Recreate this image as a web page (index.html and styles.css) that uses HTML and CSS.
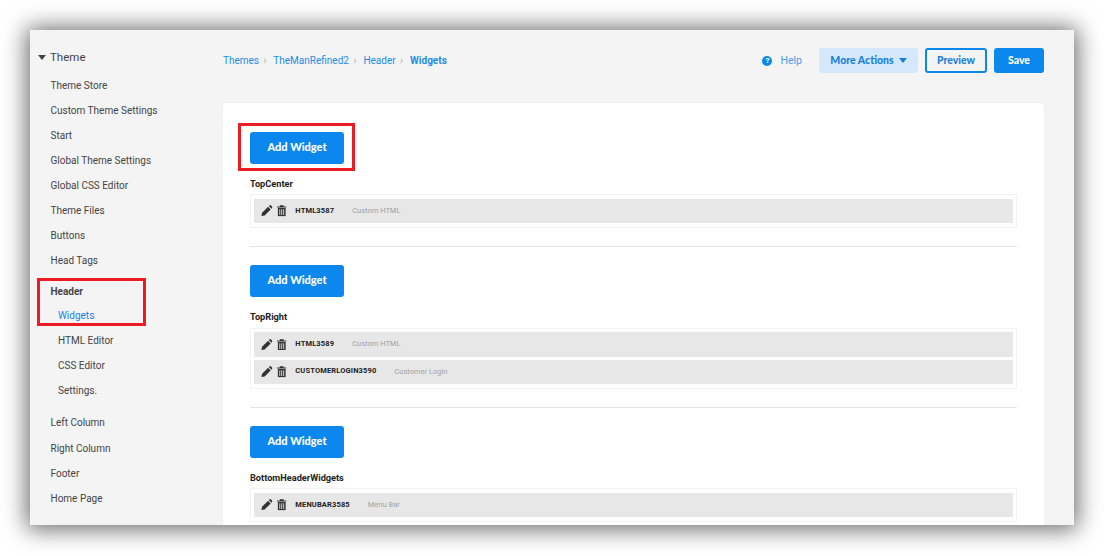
FILE: index.html
```html
<!DOCTYPE html>
<html lang="en">
<head>
  <meta charset="UTF-8">
  <meta name="viewport" content="width=device-width, initial-scale=1.0">
  <title>Widgets</title>
  <link rel="stylesheet" href="styles.css">
</head>
<body>
  <svg width="0" height="0" class="defs">
    <symbol id="pencil" viewBox="0 0 12 12">
      <path d="M0.4 11.6 L1.1 8.2 L7.4 1.9 L10.1 4.6 L3.8 10.9 Z M8.2 1.1 L9.1 0.3 Q9.7 -0.1 10.2 0.3 L11.7 1.8 Q12.1 2.3 11.7 2.9 L10.9 3.8 Z"/>
    </symbol>
    <symbol id="trash" viewBox="0 0 10 12">
      <path d="M0 1.4 H3 V0.2 H7 V1.4 H10 V2.6 H0 Z M0.9 3.2 H9.1 V11 Q9.1 11.9 8.2 11.9 H1.8 Q0.9 11.9 0.9 11 Z M2.5 4.5 V10.6 H3.4 V4.5 Z M4.55 4.5 V10.6 H5.45 V4.5 Z M6.6 4.5 V10.6 H7.5 V4.5 Z" fill-rule="evenodd"/>
    </symbol>
  </svg>

  <div class="frame">
    <aside class="sidebar">
      <div class="side-title"><span class="caret"></span>Theme</div>
      <ul class="side-list">
        <li>Theme Store</li>
        <li>Custom Theme Settings</li>
        <li>Start</li>
        <li>Global Theme Settings</li>
        <li>Global CSS Editor</li>
        <li>Theme Files</li>
        <li>Buttons</li>
        <li>Head Tags</li>
      </ul>
      <ul class="side-list side-group">
        <li class="side-head">Header</li>
        <li class="sub active">Widgets</li>
        <li class="sub">HTML Editor</li>
        <li class="sub">CSS Editor</li>
        <li class="sub">Settings.</li>
      </ul>
      <ul class="side-list side-group side-last">
        <li>Left Column</li>
        <li>Right Column</li>
        <li>Footer</li>
        <li>Home Page</li>
      </ul>
      <div class="mark mark-side"></div>
    </aside>

    <main class="main">
      <div class="topbar">
        <nav class="crumbs">
          <a>Themes</a><span class="sep">›</span>
          <a>TheManRefined2</a><span class="sep">›</span>
          <a>Header</a><span class="sep">›</span>
          <a class="current">Widgets</a>
        </nav>
        <div class="actions">
          <span class="help"><span class="help-icon">?</span>Help</span>
          <button class="btn btn-light">More Actions<span class="caret caret-blue"></span></button>
          <button class="btn btn-outline">Preview</button>
          <button class="btn btn-primary">Save</button>
        </div>
      </div>

      <section class="card">
        <div class="mark mark-add"></div>

        <div class="zone">
          <button class="btn btn-primary btn-add">Add Widget</button>
          <h4 class="zone-name">TopCenter</h4>
          <div class="widget-list">
            <div class="widget">
              <svg class="ico ico-pencil"><use href="#pencil"/></svg>
              <svg class="ico ico-trash"><use href="#trash"/></svg>
              <span class="widget-id">HTML3587</span>
              <span class="widget-type">Custom HTML</span>
            </div>
          </div>
        </div>

        <div class="zone">
          <button class="btn btn-primary btn-add">Add Widget</button>
          <h4 class="zone-name">TopRight</h4>
          <div class="widget-list">
            <div class="widget">
              <svg class="ico ico-pencil"><use href="#pencil"/></svg>
              <svg class="ico ico-trash"><use href="#trash"/></svg>
              <span class="widget-id">HTML3589</span>
              <span class="widget-type">Custom HTML</span>
            </div>
            <div class="widget">
              <svg class="ico ico-pencil"><use href="#pencil"/></svg>
              <svg class="ico ico-trash"><use href="#trash"/></svg>
              <span class="widget-id">CUSTOMERLOGIN3590</span>
              <span class="widget-type">Customer Login</span>
            </div>
          </div>
        </div>

        <div class="zone">
          <button class="btn btn-primary btn-add">Add Widget</button>
          <h4 class="zone-name">BottomHeaderWidgets</h4>
          <div class="widget-list">
            <div class="widget">
              <svg class="ico ico-pencil"><use href="#pencil"/></svg>
              <svg class="ico ico-trash"><use href="#trash"/></svg>
              <span class="widget-id">MENUBAR3585</span>
              <span class="widget-type">Menu Bar</span>
            </div>
          </div>
        </div>
      </section>
    </main>
  </div>
</body>
</html>
```

FILE: styles.css
```css
html, body {
  height: 100%;
}

body {
  margin: 0;
  padding: 30px 30px 31px;
  box-sizing: border-box;
  background-color: #fff;
  font-family: Roboto, "Liberation Sans", sans-serif;
  color: #444;
  overflow: hidden;
}

.defs {
  display: block;
  height: 0;
}

.frame {
  display: flex;
  height: 495px;
  background-color: #f4f4f4;
  box-shadow: 0 1px 22px 3px rgba(0, 0, 0, 0.6);
  overflow: hidden;
}

/* sidebar */
.sidebar {
  position: relative;
  width: 193px;
  flex: none;
  padding-top: 19px;
  box-sizing: border-box;
}

.side-title {
  display: flex;
  align-items: center;
  height: 16px;
  padding-left: 8px;
  font-size: 11.5px;
  color: #444;
}

.caret {
  display: inline-block;
  width: 0;
  height: 0;
  margin-right: 4px;
  border-left: 4px solid transparent;
  border-right: 4px solid transparent;
  border-top: 5px solid #444;
}

.side-list {
  list-style: none;
  margin: 8px 0 0;
  padding: 0 0 0 20.5px;
  font-size: 10px;
}

.side-list li {
  height: 25px;
  line-height: 25px;
  white-space: nowrap;
}

.side-group {
  margin-top: 6.8px;
}

.side-last {
  margin-top: 7.4px;
}

.side-last li {
  height: 25.4px;
  line-height: 25.4px;
}

.side-list .side-head {
  height: 23px;
  line-height: 23px;
  font-weight: 700;
}

.side-list .sub {
  padding-left: 7.5px;
}

.side-list .active {
  color: #1a82e2;
}

/* red annotation boxes */
.mark {
  position: absolute;
  border: 3px solid #ed1c24;
  box-sizing: border-box;
  pointer-events: none;
}

.mark-side {
  left: 7px;
  top: 248px;
  width: 109px;
  height: 48px;
}

.mark-add {
  left: 15px;
  top: 20px;
  width: 117px;
  height: 48px;
}

/* main column */
.main {
  flex: 1;
  min-width: 0;
  padding-right: 30px;
}

.topbar {
  display: flex;
  justify-content: space-between;
  align-items: center;
  height: 26px;
  margin-top: 18px;
}

.crumbs {
  position: relative;
  top: -1px;
  font-size: 10px;
  color: #1d8ce8;
}

.crumbs .sep {
  margin: 0 4.5px;
  color: #aaa;
}

.crumbs .current {
  font-weight: 700;
}

.actions {
  display: flex;
  align-items: center;
  margin-top: -1px;
}

.help {
  display: flex;
  align-items: center;
  margin-right: 17px;
  font-size: 10.5px;
  color: #4a9de8;
}

.help-icon {
  width: 10px;
  height: 10px;
  margin-right: 8px;
  border-radius: 50%;
  background-color: #0b87ee;
  color: #fff;
  font-size: 8px;
  font-weight: 700;
  line-height: 10px;
  text-align: center;
}

.btn {
  height: 25.5px;
  padding: 0 0 2px;
  border: 0;
  border-radius: 3px;
  font-family: Lato, Roboto, sans-serif;
  font-size: 10.5px;
  font-weight: 900;
}

.btn-light {
  display: flex;
  align-items: center;
  justify-content: center;
  width: 99px;
  background-color: #d3e8fb;
  color: #1a7fdc;
}

.caret-blue {
  margin: 2px 0 0 5px;
  border-top-color: #1a7fdc;
}

.btn-outline {
  width: 62px;
  margin-left: 7px;
  background-color: transparent;
  border: 2px solid #0b87ee;
  color: #1a7fdc;
}

.btn-primary {
  background-color: #0b87ee;
  color: #fff;
}

.actions .btn-primary {
  width: 50px;
  margin-left: 7px;
}

/* card with zones */
.card {
  position: relative;
  margin-top: 29px;
  padding: 2px 27px 0;
  background-color: #fff;
  border-radius: 4px 4px 0 0;
  box-shadow: 0 0 2px rgba(0, 0, 0, 0.06);
}

.zone {
  padding-top: 27px;
  padding-bottom: 18.6px;
  border-bottom: 1px solid #e6e6e6;
}

.zone:last-child {
  border-bottom: 0;
}

.zone + .zone {
  padding-top: 17.8px;
}

.btn-add {
  display: block;
  width: 94px;
  height: 31.6px;
  font-size: 11px;
}

.zone-name {
  margin: 14.5px 0 4.4px;
  height: 12px;
  font-size: 9.2px;
  line-height: 12px;
  font-weight: 700;
  color: #222;
}

.widget-list {
  display: flex;
  flex-direction: column;
  gap: 3px;
  padding: 3.3px;
  background-color: #fff;
  border: 1px solid #f2f2f2;
}

.widget {
  display: flex;
  align-items: center;
  height: 24.7px;
  padding-left: 7px;
  background-color: #e7e7e7;
}

.ico {
  flex: none;
  fill: #333;
}

.ico-pencil {
  width: 11.5px;
  height: 11.5px;
}

.ico-trash {
  width: 9.5px;
  height: 11.5px;
  margin-left: 4.5px;
}

.widget-id {
  margin: -2px 0 0 8.5px;
  font-size: 7.5px;
  letter-spacing: 0.15px;
  font-weight: 700;
  color: #222;
}

.widget-type {
  margin: -1px 0 0 18px;
  font-size: 7.5px;
  color: #a2a2a2;
}
```
